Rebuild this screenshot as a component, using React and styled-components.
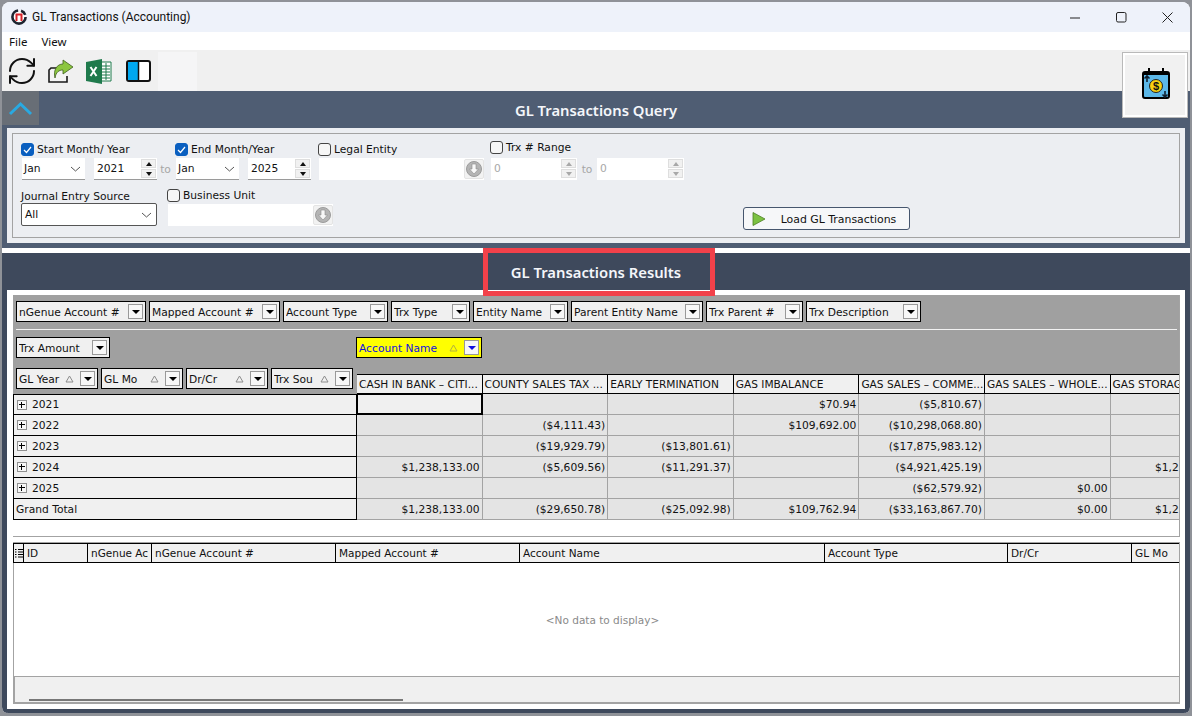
import React from "react";
import styled, { createGlobalStyle } from "styled-components";
import { RefreshCw } from "lucide-react";

const GlobalStyle = createGlobalStyle`
  html, body {
    margin: 0;
    padding: 0;
    background: #8f9298;
  }
  * {
    box-sizing: border-box;
  }
`;

const Page = styled.div`
  width: 1192px;
  height: 716px;
  padding: 2px 2px 3px 2px;
  overflow: hidden;
  font-family: "DejaVu Sans", sans-serif;
  font-size: 10.7px;
  color: #111;
`;

const Window = styled.div`
  position: relative;
  height: 100%;
  display: flex;
  flex-direction: column;
  border-radius: 8px 8px 6px 6px;
  overflow: hidden;
  background: #fff;
`;

const TitleBar = styled.div`
  height: 30px;
  flex: none;
  display: flex;
  align-items: center;
  padding-left: 8px;
  background: #eef2fa;
  font-family: Roboto, sans-serif;
  font-size: 12px;
`;

const TitleText = styled.span`
  margin-left: 4px;
  flex: 1;
`;

const WinButton = styled.div`
  width: 46px;
  height: 30px;
  display: flex;
  align-items: center;
  justify-content: center;
`;

const MenuBar = styled.div`
  height: 18px;
  flex: none;
  display: flex;
  align-items: center;
  gap: 14px;
  padding-left: 7px;
  background: #fff;
  font-family: "Noto Sans", sans-serif;
  font-size: 11.5px;
`;

const Toolbar = styled.div`
  height: 41px;
  flex: none;
  display: flex;
  background: #f0f0f0;
`;

const ToolIcons = styled.div`
  width: 156px;
  display: flex;
  align-items: center;
  padding: 1px 0 0 4px;
  gap: 12px;
`;

const RefreshIcon = styled(RefreshCw)`
  margin-right: -2px;
`;

const ToolSpare = styled.div`
  width: 39px;
  margin-top: 2px;
  background: #f5f5f6;
`;

const FloatBox = styled.div`
  position: absolute;
  z-index: 2;
  top: 50px;
  right: 2px;
  width: 66px;
  height: 66px;
  display: flex;
  align-items: center;
  justify-content: center;
  padding: 0 0 3px 2px;
  background: #f1f1f1;
  border: 1px solid #b9b9b9;
  outline: 2px solid #fff;
  outline-offset: -3px;
`;

const Banner = styled.div`
  height: ${(p) => p.$height}px;
  flex: none;
  display: flex;
  align-items: center;
  position: relative;
  justify-content: center;
  padding-top: ${(p) => p.$pad || 0}px;
  background: ${(p) => p.$bg};
  color: #f4f6fa;
  font-family: "Noto Sans", sans-serif;
  font-size: 14.8px;
  font-weight: 600;
`;

const CollapseBtn = styled.div`
  position: absolute;
  left: 0;
  top: 0;
  width: 37px;
  height: 100%;
  display: flex;
  align-items: center;
  justify-content: center;
  background: #686e76;
`;

const QueryPanel = styled.div`
  height: 123px;
  flex: none;
  padding: 5px 0;
  background: #eceef2;
  border: solid #4f5d73;
  border-width: 3px 5px 5px 5px;
`;

const GroupBox = styled.div`
  height: 105px;
  margin: 0 5px;
  border: 1px solid #a3a3a3;
  padding: 6px 0 0 8px;
`;

const FormRow = styled.div`
  display: flex;
  align-items: flex-start;
  height: ${(p) => p.$height}px;
`;

const Field = styled.div`
  width: ${(p) => p.$width}px;
  flex: none;
  display: flex;
  flex-direction: column;
  padding-top: ${(p) => p.$top || 0}px;
`;

const CheckLine = styled.div`
  display: flex;
  align-items: center;
  gap: 3px;
  height: ${(p) => p.$height || 15}px;
  margin-bottom: ${(p) => p.$after || 0}px;
  white-space: pre;
`;

const Check = styled.span`
  width: 13px;
  height: 13px;
  flex: none;
  border-radius: 3px;
  display: flex;
  align-items: center;
  justify-content: center;
  border: 1px solid ${(p) => (p.$on ? "#0a5fc0" : "#444")};
  background: ${(p) => (p.$on ? "#0a5fc0" : "#f6f6f6")};
`;

const Controls = styled.div`
  display: flex;
  align-items: center;
  padding-left: 1px;
`;

const MonthSelect = styled.div`
  width: 63px;
  height: 22px;
  display: flex;
  align-items: center;
  justify-content: space-between;
  padding: 0 4px 0 2px;
  background: #fff;
  border-bottom: 1px solid #9a9a9a;
`;

const YearBox = styled.div`
  width: ${(p) => p.$width || 63}px;
  margin-left: ${(p) => p.$left || 0}px;
  height: 22px;
  display: flex;
  align-items: center;
  justify-content: space-between;
  padding: 0 1px 0 3px;
  background: #fff;
  border-bottom: 1px solid ${(p) => (p.$off ? "#fff" : "#9a9a9a")};
  color: ${(p) => (p.$off ? "#a8a8a8" : "#111")};
`;

const Spin = styled.div`
  width: 15px;
  display: flex;
  flex-direction: column;
  gap: 1px;
`;

const SpinBtn = styled.div`
  height: 9px;
  display: flex;
  align-items: center;
  justify-content: center;
  background: #f1f1f1;
  border: 1px solid #dedede;
  &::after {
    content: "";
    border-left: 3px solid transparent;
    border-right: 3px solid transparent;
    ${(p) => (p.$up ? "border-bottom" : "border-top")}: 4px solid ${(p) => (p.$off ? "#a8a8a8" : "#111")};
  }
`;

const ToText = styled.span`
  width: ${(p) => p.$width}px;
  text-align: center;
  color: #a6a6a6;
`;

const Lookup = styled.div`
  width: 165px;
  height: 22px;
  margin-left: 1px;
  display: flex;
  align-items: center;
  justify-content: flex-end;
  background: #fff;
`;

const LookupBtn = styled.div`
  width: 20px;
  height: 20px;
  display: flex;
  align-items: center;
  justify-content: center;
  background: #f2f2f2;
  border: 1px solid #e4e4e4;
  border-radius: 2px;
`;

const SourceSelect = styled.div`
  width: 136px;
  height: 23px;
  display: flex;
  align-items: center;
  justify-content: space-between;
  padding: 0 4px 0 3px;
  background: #fff;
  border: 1px solid #555;
  border-radius: 2px;
`;

const LoadButton = styled.div`
  width: 167px;
  height: 23px;
  margin-top: 20px;
  position: relative;
  display: flex;
  align-items: center;
  justify-content: center;
  padding: 1px 0 0 24px;
  background: #f6f7f9;
  border: 1px solid #46566e;
  border-radius: 3px;
  font-size: 10.9px;
`;

const PlayMark = styled.span`
  position: absolute;
  left: 8px;
  top: 4px;
  display: flex;
`;

const Results = styled.div`
  flex: 1;
  display: flex;
  flex-direction: column;
  padding-top: 5px;
  background: #fff;
  min-height: 0;
`;

const ResultsBody = styled.div`
  flex: 1;
  min-height: 0;
  display: flex;
  flex-direction: column;
  padding: 5px 5px 5px 6px;
  background: #fff;
  border: solid #3e495c;
  border-width: 0 5px 4px 5px;
`;

const RedMark = styled.div`
  position: absolute;
  left: 481px;
  top: 246px;
  width: 232px;
  height: 48px;
  border: 5px solid #f2414a;
`;

const Pivot = styled.div`
  height: 242px;
  flex: none;
  background: #fff;
  border: solid #a3a3a3;
  border-width: 0 1px 1px 0;
  overflow: hidden;
`;

const FieldArea = styled.div`
  height: 99px;
  overflow: hidden;
  background: #a0a0a0;
  padding: 6px 0 0 3px;
`;

const FilterRow = styled.div`
  display: flex;
  gap: 3px;
  padding-bottom: 7px;
  border-bottom: 1px solid #f2f2f2;
  margin: 0 2px 0 0;
`;

const FieldSplit = styled.div`
  display: flex;
  padding-top: 7px;
`;

const FieldLeft = styled.div`
  width: 340px;
  flex: none;
  display: flex;
  flex-direction: column;
  align-items: flex-start;
  gap: 10px;
`;

const FieldRowGroup = styled.div`
  display: flex;
  gap: 3px;
`;

const PivotField = styled.div`
  width: ${(p) => p.$width}px;
  height: 21px;
  flex: none;
  display: flex;
  align-items: center;
  padding: 1px 2px 0 2px;
  background: ${(p) => (p.$active ? "#ffff00" : "#f0f0f0")};
  color: ${(p) => (p.$active ? "#1010e0" : "#111")};
  border: 1px solid #000;
  white-space: nowrap;
  overflow: hidden;
`;

const FieldLabel = styled.span`
  flex: 1;
  overflow: hidden;
`;

const SortMark = styled.span`
  display: flex;
  margin-right: 6px;
`;

const DropBtn = styled.span`
  width: 15px;
  height: 15px;
  margin-top: -1px;
  flex: none;
  display: flex;
  align-items: center;
  justify-content: center;
  background: #f7f7f7;
  border: 1px solid #999;
  &::after {
    content: "";
    border-left: 4px solid transparent;
    border-right: 4px solid transparent;
    border-top: 4px solid ${(p) => (p.$active ? "#1010e0" : "#000")};
  }
`;

const Grid = styled.div`
  display: grid;
  grid-template-columns: 344px repeat(7, 125.6px);
  grid-auto-rows: 21px;
  width: 1224px;
`;

const ColHead = styled.div`
  height: 20px;
  display: flex;
  align-items: center;
  padding: 0 1px 0 2px;
  background: #f0f0f0;
  border: solid #000;
  border-width: 1px 1px 1px 0;
  white-space: nowrap;
  overflow: hidden;
  font-size: 10.6px;
`;

const ColHeadRow = styled.div`
  display: flex;
  margin: 16px 0 0 1px;
  & > div {
    width: 125.6px;
    flex: none;
  }
`;

const FieldRight = styled.div`
  display: flex;
  flex-direction: column;
  align-items: flex-start;
`;

const RowHead = styled.div`
  display: flex;
  align-items: center;
  gap: 5px;
  padding-left: ${(p) => (p.$plain ? 2 : 3)}px;
  background: #f0f0f0;
  border: solid #000;
  border-width: 0 1px 1px 1px;
  &:first-child {
    border-top-width: 1px;
  }
`;

const Expand = styled.span`
  width: 10px;
  height: 10px;
  position: relative;
  border: 1px solid #8f8f8f;
  background: #f7f7f7;
  &::before {
    content: "";
    position: absolute;
    left: 1px;
    right: 1px;
    top: 3px;
    height: 2px;
    border-top: 1px solid #000;
  }
  &::after {
    content: "";
    position: absolute;
    top: 1px;
    bottom: 1px;
    left: 3px;
    width: 2px;
    border-left: 1px solid #000;
  }
`;

const Cell = styled.div`
  display: flex;
  align-items: center;
  justify-content: flex-end;
  padding-right: 2px;
  white-space: nowrap;
  background: ${(p) => (p.$selected ? "#f0f0f0" : "#e4e4e4")};
  border: solid ${(p) => (p.$selected ? "#000" : "#a3a3a3")};
  border-width: ${(p) => (p.$selected ? "1px 2px 2px 1px" : "0 1px 1px 0")};
`;

const Detail = styled.div`
  flex: 1;
  min-height: 0;
  margin-top: 5px;
  display: flex;
  flex-direction: column;
  border: solid #a3a3a3;
  border-width: 1px 1px 2px 0;
`;

const DetailHead = styled.div`
  height: 20px;
  flex: none;
  display: grid;
  grid-template-columns: 10px 64px 64px 184px 184px 305px 183px 124px 1fr;
  background: #f0f0f0;
  border: solid #000;
  border-width: 1px 0 1px 1px;
`;

const DetailCol = styled.div`
  display: flex;
  align-items: center;
  padding-left: 3px;
  white-space: nowrap;
  overflow: hidden;
  border-right: 1px solid ${(p) => (p.$last ? "transparent" : "#000")};
  font-size: 10.5px;
`;

const DetailMenu = styled(DetailCol)`
  padding-left: 1px;
`;

const DetailEmpty = styled.div`
  flex: 1;
  display: flex;
  align-items: center;
  justify-content: center;
  background: #fff;
  border-left: 1px solid #a3a3a3;
  color: #8a8a8a;
  font-size: 10.5px;
  padding-left: 12px;
`;

const DetailFoot = styled.div`
  height: 26px;
  flex: none;
  display: flex;
  align-items: flex-end;
  padding: 0 0 1px 14px;
  background: #f0f0f0;
  border: solid #a3a3a3;
  border-width: 1px 0 0 2px;
`;

const Thumb = styled.div`
  width: 374px;
  height: 2px;
  background: #777;
`;

const Chevron = () => (
  <svg width="11" height="6" viewBox="0 0 11 6">
    <path d="M1 1l4.5 4L10 1" fill="none" stroke="#555" strokeWidth="1" />
  </svg>
);

const CheckMark = () => (
  <svg width="9" height="8" viewBox="0 0 9 8">
    <path d="M1 4l2.5 2.5L8 1" fill="none" stroke="#fff" strokeWidth="1.2" />
  </svg>
);

const DownCircle = () => (
  <svg width="16" height="16" viewBox="0 0 16 16">
    <circle cx="8" cy="8" r="7.5" fill="#b4b4b4" stroke="#9b9b9b" />
    <path d="M6 3h4v5h2.5L8 13 3.5 8H6z" fill="#f8f8f8" stroke="#8c8c8c" strokeWidth="0.6" />
  </svg>
);

const SortUp = ({ color }) => (
  <svg width="9" height="8" viewBox="0 0 9 8">
    <path d="M4.5 1L8 7H1z" fill="none" stroke={color} strokeWidth="1" />
  </svg>
);

const AppLogo = () => (
  <svg width="18" height="18" viewBox="0 0 18 18">
    <circle cx="9" cy="9" r="6.6" fill="#fff" stroke="#1d2430" strokeWidth="2.6" strokeDasharray="30 3 6 3" />
    <path d="M6.5 13V6.5h5V13" fill="none" stroke="#d8232a" strokeWidth="2" />
  </svg>
);

const ShareIcon = () => (
  <svg width="26" height="24" viewBox="0 0 26 24">
    <path d="M11 9H3L1 11v12h18v-6" fill="#f4f4f4" stroke="#1a1a1a" strokeWidth="1.6" />
    <path d="M15 1l10 7-10 7v-4c-4 0-7 2-8 8-2-8 2-14 8-14z" fill="#8cc63f" stroke="#3f5f1f" strokeWidth="0.8" />
  </svg>
);

const ExcelIcon = () => (
  <svg width="26" height="25" viewBox="0 0 26 25">
    <path d="M13 3h12v19H13z" fill="#fff" stroke="#1f7a4c" strokeWidth="1" />
    <path d="M16 7h8M16 10h8M16 13h8M16 16h8M16 19h8M20 4v17" stroke="#1f7a4c" strokeWidth="1" />
    <path d="M0 3l16-3v25L0 22z" fill="#1f7a4c" />
    <path d="M4.5 8l6 9M10.5 8l-6 9" stroke="#fff" strokeWidth="2" />
  </svg>
);

const PanelIcon = () => (
  <svg width="27" height="22" viewBox="-2 0 27 22">
    <rect x="1" y="1" width="23" height="20" rx="2" fill="#fff" stroke="#111" strokeWidth="2" />
    <path d="M2 2h10v18H2z" fill="#00a8f0" />
    <path d="M12.5 1v20" stroke="#111" strokeWidth="1.5" />
  </svg>
);

const CalendarIcon = () => (
  <svg width="30" height="33" viewBox="0 0 30 33">
    <path d="M8 1v6M22 1v6" stroke="#000" strokeWidth="2" />
    <rect x="2" y="5" width="26" height="26" rx="2" fill="#5cb8e8" stroke="#000" strokeWidth="2" />
    <path d="M2 7h26" stroke="#000" strokeWidth="2" />
    <circle cx="15" cy="19" r="6.5" fill="#f8d010" stroke="#222" strokeWidth="1" />
    <text x="15" y="23" textAnchor="middle" fontFamily="Liberation Sans, sans-serif" fontWeight="700" fontSize="11" fill="#111">$</text>
    <path d="M6 15V9M3.5 11.5L6 9l2.5 2.5M24 24v6M21.5 27.5L24 30l2.5-2.5" fill="none" stroke="#102030" strokeWidth="1.6" />
  </svg>
);

const filters = [
  ["nGenue Account #", 130],
  ["Mapped Account #", 131],
  ["Account Type", 105],
  ["Trx Type", 79],
  ["Entity Name", 95],
  ["Parent Entity Name", 132],
  ["Trx Parent #", 97],
  ["Trx Description", 115],
];

const rowFields = ["GL Year", "GL Mo", "Dr/Cr", "Trx Sou"];

const columns = [
  "CASH IN BANK – CITI...",
  "COUNTY SALES TAX ...",
  "EARLY TERMINATION",
  "GAS IMBALANCE",
  "GAS SALES – COMME...",
  "GAS SALES – WHOLE...",
  "GAS STORAGE",
];

const rows = [
  ["2021", "", "", "", "$70.94", "($5,810.67)", "", ""],
  ["2022", "", "($4,111.43)", "", "$109,692.00", "($10,298,068.80)", "", ""],
  ["2023", "", "($19,929.79)", "($13,801.61)", "", "($17,875,983.12)", "", ""],
  ["2024", "$1,238,133.00", "($5,609.56)", "($11,291.37)", "", "($4,921,425.19)", "", "$1,238,133.00"],
  ["2025", "", "", "", "", "($62,579.92)", "$0.00", ""],
  ["Grand Total", "$1,238,133.00", "($29,650.78)", "($25,092.98)", "$109,762.94", "($33,163,867.70)", "$0.00", "$1,238,133.00"],
];

const detailCols = ["ID", "nGenue Ac", "nGenue Account #", "Mapped Account #", "Account Name", "Account Type", "Dr/Cr", "GL Mo"];

export default function App() {
  return (
    <Page>
      <GlobalStyle />
      <Window>
        <TitleBar>
          <AppLogo />
          <TitleText>GL Transactions (Accounting)</TitleText>
          <WinButton>
            <svg width="11" height="11" viewBox="0 0 11 11">
              <path d="M0 6h10" stroke="#222" strokeWidth="1" />
            </svg>
          </WinButton>
          <WinButton>
            <svg width="11" height="11" viewBox="0 0 11 11">
              <rect x="0.5" y="0.5" width="9.5" height="9.5" rx="1.5" fill="none" stroke="#222" strokeWidth="1" />
            </svg>
          </WinButton>
          <WinButton>
            <svg width="11" height="11" viewBox="0 0 11 11">
              <path d="M0.5 0.5l10 10M10.5 0.5l-10 10" stroke="#222" strokeWidth="1" />
            </svg>
          </WinButton>
        </TitleBar>
        <MenuBar>
          <span>File</span>
          <span>View</span>
        </MenuBar>
        <Toolbar>
          <ToolIcons>
            <RefreshIcon size={32} strokeWidth={1.5} color="#111" />
            <ShareIcon />
            <ExcelIcon />
            <PanelIcon />
          </ToolIcons>
          <ToolSpare />
        </Toolbar>
        <FloatBox>
          <CalendarIcon />
        </FloatBox>
        <Banner $height={34} $bg="#4f5d73" $pad={4}>
          <CollapseBtn>
            <svg width="25" height="15" viewBox="0 0 25 15">
              <path d="M2 13L12.5 3 23 13" fill="none" stroke="#29a9e1" strokeWidth="3" />
            </svg>
          </CollapseBtn>
          GL Transactions Query
        </Banner>
        <QueryPanel>
          <GroupBox>
            <FormRow $height={47}>
              <Field $width={154} $top={2}>
                <CheckLine $after={1}>
                  <Check $on>
                    <CheckMark />
                  </Check>
                  Start Month/ Year
                </CheckLine>
                <Controls>
                  <MonthSelect>
                    Jan
                    <Chevron />
                  </MonthSelect>
                  <YearBox $left={9}>
                    2021
                    <Spin>
                      <SpinBtn $up />
                      <SpinBtn />
                    </Spin>
                  </YearBox>
                  <ToText $width={17}>to</ToText>
                </Controls>
              </Field>
              <Field $width={143} $top={2}>
                <CheckLine $after={1}>
                  <Check $on>
                    <CheckMark />
                  </Check>
                  End Month/Year
                </CheckLine>
                <Controls>
                  <MonthSelect>
                    Jan
                    <Chevron />
                  </MonthSelect>
                  <YearBox $left={9}>
                    2025
                    <Spin>
                      <SpinBtn $up />
                      <SpinBtn />
                    </Spin>
                  </YearBox>
                </Controls>
              </Field>
              <Field $width={172} $top={2}>
                <CheckLine $after={1}>
                  <Check />
                  Legal Entity
                </CheckLine>
                <Lookup>
                  <LookupBtn>
                    <DownCircle />
                  </LookupBtn>
                </Lookup>
              </Field>
              <Field $width={200}>
                <CheckLine $after={3}>
                  <Check />
                  Trx # Range
                </CheckLine>
                <Controls>
                  <YearBox $off $width={86}>
                    0
                    <Spin>
                      <SpinBtn $up $off />
                      <SpinBtn $off />
                    </Spin>
                  </YearBox>
                  <ToText $width={20}>to</ToText>
                  <YearBox $off $width={87}>
                    0
                    <Spin>
                      <SpinBtn $up $off />
                      <SpinBtn $off />
                    </Spin>
                  </YearBox>
                </Controls>
              </Field>
            </FormRow>
            <FormRow $height={45}>
              <Field $width={146} $top={2}>
                <CheckLine $height={14}>Journal Entry Source</CheckLine>
                <SourceSelect>
                  All
                  <Chevron />
                </SourceSelect>
              </Field>
              <Field $width={576} $top={1}>
                <CheckLine $after={1}>
                  <Check />
                  Business Unit
                </CheckLine>
                <Lookup>
                  <LookupBtn>
                    <DownCircle />
                  </LookupBtn>
                </Lookup>
              </Field>
              <LoadButton>
                <PlayMark>
                  <svg width="14" height="14" viewBox="0 0 14 14">
                    <path d="M1 0.5L13 7 1 13.5z" fill="#7cc242" stroke="#4b7d22" strokeWidth="0.8" />
                  </svg>
                </PlayMark>
                Load GL Transactions
              </LoadButton>
            </FormRow>
          </GroupBox>
        </QueryPanel>
        <Results>
          <Banner $height={37} $bg="#3e495c">
            GL Transactions Results
          </Banner>
          <ResultsBody>
            <Pivot>
              <FieldArea>
                <FilterRow>
                  {filters.map(([label, width]) => (
                    <PivotField key={label} $width={width}>
                      <FieldLabel>{label}</FieldLabel>
                      <DropBtn />
                    </PivotField>
                  ))}
                </FilterRow>
                <FieldSplit>
                  <FieldLeft>
                    <PivotField $width={94}>
                      <FieldLabel>Trx Amount</FieldLabel>
                      <DropBtn />
                    </PivotField>
                    <FieldRowGroup>
                      {rowFields.map((label) => (
                        <PivotField key={label} $width={82}>
                          <FieldLabel>{label}</FieldLabel>
                          <SortMark>
                            <SortUp color="#8c8c8c" />
                          </SortMark>
                          <DropBtn />
                        </PivotField>
                      ))}
                    </FieldRowGroup>
                  </FieldLeft>
                  <FieldRight>
                    <PivotField $width={126} $active>
                      <FieldLabel>Account Name</FieldLabel>
                      <SortMark>
                        <SortUp color="#b0b040" />
                      </SortMark>
                      <DropBtn $active />
                    </PivotField>
                    <ColHeadRow>
                      {columns.map((c) => (
                        <ColHead key={c}>{c}</ColHead>
                      ))}
                    </ColHeadRow>
                  </FieldRight>
                </FieldSplit>
              </FieldArea>
              <Grid>
                {rows.map((row, r) => (
                  <React.Fragment key={row[0]}>
                    <RowHead $plain={r === 5}>
                      {r < 5 && <Expand />}
                      {row[0]}
                    </RowHead>
                    {row.slice(1).map((val, c) => (
                      <Cell key={c} $selected={r === 0 && c === 0}>
                        {val}
                      </Cell>
                    ))}
                  </React.Fragment>
                ))}
              </Grid>
            </Pivot>
            <Detail>
              <DetailHead>
                <DetailMenu>
                  <svg width="8" height="11" viewBox="0 0 8 11">
                    <path d="M0 1.5h1.5M3 1.5h5M0 4h1.5M3 4h5M0 6.5h1.5M3 6.5h5M0 9h1.5M3 9h5" stroke="#000" strokeWidth="1" />
                  </svg>
                </DetailMenu>
                {detailCols.map((c, i) => (
                  <DetailCol key={c} $last={i === detailCols.length - 1}>
                    {c}
                  </DetailCol>
                ))}
              </DetailHead>
              <DetailEmpty>&lt;No data to display&gt;</DetailEmpty>
              <DetailFoot>
                <Thumb />
              </DetailFoot>
            </Detail>
          </ResultsBody>
        </Results>
        <RedMark />
      </Window>
    </Page>
  );
}
